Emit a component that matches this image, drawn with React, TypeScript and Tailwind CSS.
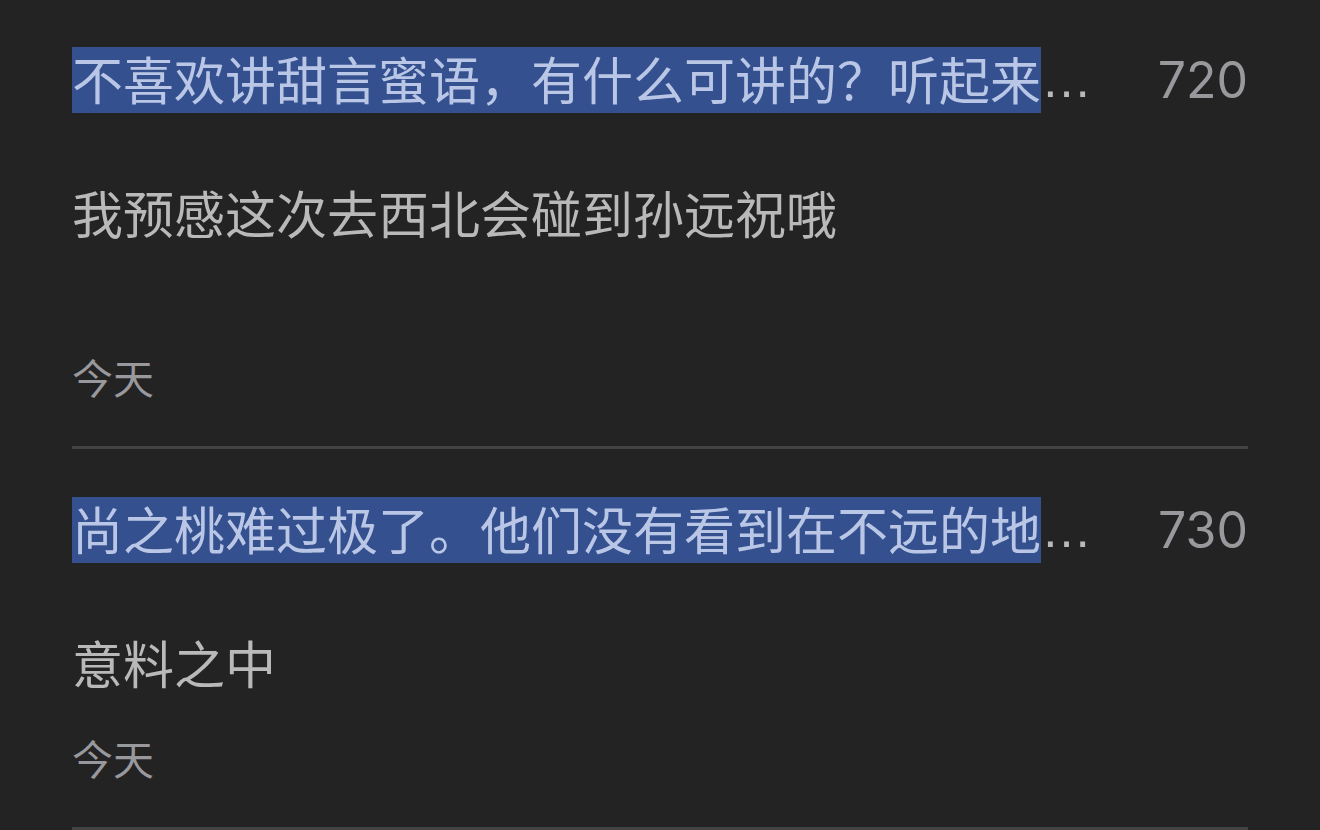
interface Note {
  id: number
  quote: string
  page: number
  text: string
  date: string
  gap: string
}

const notes: Note[] = [
  {
    id: 1,
    quote: '不喜欢讲甜言蜜语，有什么可讲的？听起来',
    page: 720,
    text: '我预感这次去西北会碰到孙远祝哦',
    date: '今天',
    gap: 'mt-[106px]',
  },
  {
    id: 2,
    quote: '尚之桃难过极了。他们没有看到在不远的地',
    page: 730,
    text: '意料之中',
    date: '今天',
    gap: 'mt-[37px]',
  },
]

function NoteItem({ note }: { note: Note }) {
  return (
    <li className="border-b-3 border-[#434345] pt-12 pb-[43px] first:pt-[47px]">
      <div className="flex items-center justify-between">
        <p className="flex items-start whitespace-nowrap text-[51px] leading-[62px] text-[#b9b9b9]">
          <mark className="bg-[#34508f] pb-1 text-[#b9c6e6]">{note.quote}</mark>
          <span className="font-['Liberation_Sans',sans-serif] leading-[66px]">…</span>
        </p>
        <span className="font-[Inter,sans-serif] text-[50px] leading-[66px] text-[#98989d]">{note.page}</span>
      </div>
      <p className="mt-[68px] text-[51px] leading-[62px] text-[#b9b9b9]">{note.text}</p>
      <time className={`block text-[41px] leading-[54px] text-[#98989d] ${note.gap}`}>{note.date}</time>
    </li>
  )
}

export default function App() {
  return (
    <main
      lang="zh-CN"
      className="min-h-screen bg-[#232324] px-[72px] font-['Noto_Sans_CJK_SC',sans-serif]"
    >
      <ul>
        {notes.map((note) => (
          <NoteItem key={note.id} note={note} />
        ))}
      </ul>
    </main>
  )
}
